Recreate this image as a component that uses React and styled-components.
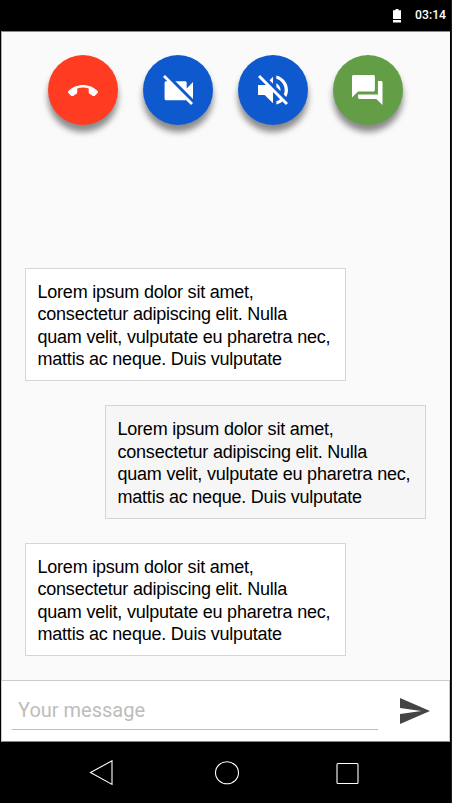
import React from "react";
import styled, { createGlobalStyle } from "styled-components";

const GlobalStyle = createGlobalStyle`
  *, *::before, *::after { box-sizing: border-box; }
  body { margin: 0; background: #000; }
`;

const Phone = styled.main`
  width: 452px;
  height: 803px;
  display: flex;
  flex-direction: column;
  padding: 0 1px 0 1px;
  background: #000;
  border-right: 1px solid #1c1c1c;
  overflow: hidden;
  font-family: "Liberation Sans", Arial, sans-serif;
`;

const StatusBar = styled.header`
  height: 31px;
  flex: none;
  display: flex;
  align-items: center;
  justify-content: flex-end;
  gap: 14px;
  padding-right: 4px;
  color: #fff;
`;

const Clock = styled.time`
  font: 500 12.2px/31px Roboto, sans-serif;
`;

const Screen = styled.section`
  height: 649px;
  flex: none;
  display: flex;
  flex-direction: column;
  background: #fafafa;
  border-top: 1px solid #8c8888;
  border-left: 1px solid #b5b1b1;
`;

const CallControls = styled.div`
  display: flex;
  gap: 25px;
  padding: 23.3px 0 0 45.5px;
`;

const RoundButton = styled.button`
  width: 70px;
  height: 70px;
  padding: 0 0 0 ${(p) => p.$shift || 0}px;
  border: 0;
  border-radius: 50%;
  display: flex;
  align-items: center;
  justify-content: center;
  color: #fff;
  background: ${(p) => p.$color};
  box-shadow: 0 7px 6px rgba(0, 0, 0, 0.45);
`;

const Icon = styled.svg`
  display: block;
  flex: none;
  width: ${(p) => p.$w}px;
  height: ${(p) => p.$h}px;
  fill: currentColor;
`;

const Conversation = styled.div`
  display: flex;
  flex-direction: column;
  gap: 24px;
  padding: 142.6px 24px 0 23px;
`;

const Message = styled.p`
  width: 321px;
  height: 113.5px;
  margin: 0;
  padding: 12px 0 0 11.5px;
  align-self: ${(p) => (p.$own ? "flex-end" : "flex-start")};
  background: ${(p) => (p.$own ? "#f6f6f6" : "#fff")};
  border: 1px solid #d5d5d5;
  color: #000;
  font-size: 18px;
  letter-spacing: -0.22px;
  line-height: 22.4px;
  white-space: nowrap;
`;

const Composer = styled.form`
  height: 62px;
  flex: none;
  display: flex;
  align-items: flex-start;
  background: #fff;
  border: 1px solid #ccc;
  border-bottom-color: #858585;
  padding: 7px 19px 0 10px;
  justify-content: space-between;
`;

const Field = styled.input`
  width: 366px;
  height: 42px;
  padding: 2px 6px 0;
  border: 0;
  border-bottom: 1px solid #bdbdbd;
  outline: 0;
  background: transparent;
  font: 400 20px Roboto, sans-serif;
  &::placeholder { color: #bdbdbd; opacity: 1; }
`;

const SendButton = styled.button`
  border: 0;
  padding: 10px 0 0;
  background: none;
  color: #444;
`;

const NavBar = styled.nav`
  flex: 1;
  display: flex;
  padding: 18px 0 0 87px;
`;

const NavButton = styled.button`
  width: ${(p) => p.$w}px;
  height: 26px;
  padding: 0;
  border: 0;
  background: none;
  svg { fill: none; stroke: #fff; stroke-width: 1.1; }
`;

const controls = [
  { label: "End call", color: "#ff3b22", w: 30, h: 11.5, box: "0 7 24 8.86",
    d: "M12 9c-1.6 0-3.15.25-4.6.72v3.1c0 .39-.23.74-.56.9-.98.49-1.87 1.12-2.66 1.85-.18.18-.43.28-.7.28-.28 0-.53-.11-.71-.29L.29 13.08c-.18-.17-.29-.42-.29-.7 0-.28.11-.53.29-.71C3.34 8.78 7.46 7 12 7s8.66 1.78 11.71 4.67c.18.18.29.43.29.71 0 .28-.11.53-.29.71l-2.48 2.48c-.18.18-.43.29-.71.29-.27 0-.52-.11-.7-.28-.79-.74-1.69-1.36-2.67-1.85-.33-.16-.56-.5-.56-.9v-3.1C15.15 9.25 13.6 9 12 9z" },
  { label: "Turn camera off", color: "#0f59cf", w: 30, h: 30, box: "2 2 19 19", shift: 1,
    d: "M21 6.5l-4 4V7c0-.55-.45-1-1-1H9.82L21 17.18V6.5zM3.27 2L2 3.27 4.73 6H4c-.55 0-1 .45-1 1v10c0 .55.45 1 1 1h12c.21 0 .39-.08.54-.18L19.73 21 21 19.73 3.27 2z" },
  { label: "Mute sound", color: "#0f59cf", w: 30, h: 30, box: "3 3 18 18",
    d: "M16.5 12c0-1.77-1.02-3.29-2.5-4.03v2.21l2.45 2.45c.03-.2.05-.41.05-.63zm2.5 0c0 .94-.2 1.82-.54 2.64l1.51 1.51C20.63 14.91 21 13.5 21 12c0-4.28-2.99-7.86-7-8.77v2.06c2.89.86 5 3.54 5 6.71zM4.27 3L3 4.27 7.73 9H3v6h4l5 5v-6.73l4.25 4.25c-.67.52-1.42.93-2.25 1.18v2.06c1.38-.31 2.63-.95 3.69-1.81L19.73 21 21 19.73l-9-9L4.27 3zM12 4L9.91 6.09 12 8.18V4z" },
  { label: "Chat", color: "#639e46", w: 30.5, h: 30, box: "2 2 20 20",
    d: "M21 6h-2v9H6v2c0 .55.45 1 1 1h11l4 4V7c0-.55-.45-1-1-1zm-4 6V3c0-.55-.45-1-1-1H3c-.55 0-1 .45-1 1v14l4-4h10c.55 0 1-.45 1-1z" },
];

const messages = [
  { id: 1, own: false },
  { id: 2, own: true },
  { id: 3, own: false },
];

export default function App() {
  return (
    <>
      <GlobalStyle />
      <Phone>
        <StatusBar>
          <Icon $w={8} $h={14} viewBox="0 0 8 14" aria-hidden="true">
            <path d="M2.5 0h3v1.3H8V10H0V1.3h2.5zM0 11h8v2.5H0z" />
          </Icon>
          <Clock>03:14</Clock>
        </StatusBar>
        <Screen>
          <CallControls>
            {controls.map((c) => (
              <RoundButton key={c.label} $color={c.color} $shift={c.shift} aria-label={c.label}>
                <Icon $w={c.w} $h={c.h} viewBox={c.box} preserveAspectRatio="none">
                  <path d={c.d} />
                </Icon>
              </RoundButton>
            ))}
          </CallControls>
          <Conversation>
            {messages.map((m) => (
              <Message key={m.id} $own={m.own}>
                Lorem ipsum dolor sit amet,<br />
                consectetur adipiscing elit. Nulla<br />
                quam velit, vulputate eu pharetra nec,<br />
                mattis ac neque. Duis vulputate
              </Message>
            ))}
          </Conversation>
        </Screen>
        <Composer>
          <Field placeholder="Your message" />
          <SendButton type="button" aria-label="Send">
            <Icon $w={30} $h={26} viewBox="2 3 21 18" preserveAspectRatio="none">
              <path d="M2.01 21L23 12 2.01 3 2 10l15 2-15 2z" />
            </Icon>
          </SendButton>
        </Composer>
        <NavBar>
          <NavButton $w={126} aria-label="Back">
            <Icon $w={26} $h={26} viewBox="0 0 26 26"><path d="M24 .8v23.6L2.5 12.6z" /></Icon>
          </NavButton>
          <NavButton $w={121} aria-label="Home">
            <Icon $w={26} $h={26} viewBox="0 0 26 26"><ellipse cx="13" cy="12.8" rx="11.5" ry="11" /></Icon>
          </NavButton>
          <NavButton $w={26} aria-label="Recent apps">
            <Icon $w={26} $h={26} viewBox="0 0 26 26"><rect x="2" y="3.5" width="21" height="20" rx="1" /></Icon>
          </NavButton>
        </NavBar>
      </Phone>
    </>
  );
}
